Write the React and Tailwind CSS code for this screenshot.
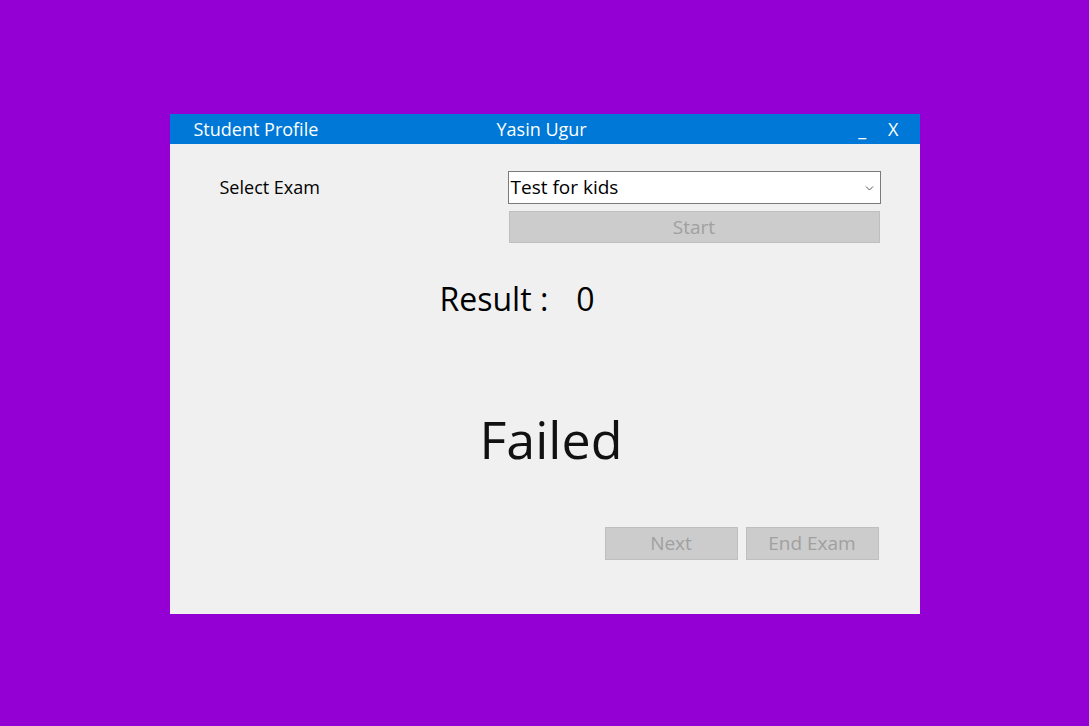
export default function App() {
  const font = { fontFamily: '"Open Sans", "Noto Sans", sans-serif' };
  return (
    <div className="flex h-[726px] w-[1089px] items-start justify-center bg-[#9400d3] pt-[114px]" style={font}>
      <div className="flex h-[500px] w-[750px] flex-col bg-[#f0f0f0]">
        {/* title bar */}
        <div className="flex h-[30px] items-center bg-[#0078d7] text-[18px] text-white">
          <div className="w-[327px] pl-[24px] leading-none">Student Profile</div>
          <div className="flex-1 leading-none">Yasin Ugur</div>
          <div className="pr-[21px] leading-none">
            <span className="mr-[22px]">_</span>
            <span>X</span>
          </div>
        </div>

        <div className="flex flex-col px-[39px]">
          <div className="mt-[27px] flex items-start">
            <div className="w-[299px] pl-[11px] pt-[3px] text-[18px] leading-[27px] text-black">Select Exam</div>
            <div className="flex w-[373px] flex-col">
              <div className="flex h-[33px] items-center justify-between border border-[#7a7a7a] bg-white pl-[2px] pr-[6px] text-[19px] text-black">
                <span>Test for kids</span>
                <svg width="9" height="6" viewBox="0 0 9 6" fill="none" stroke="#555" strokeWidth="1">
                  <path d="M1 1.5 L4.5 5 L8 1.5" />
                </svg>
              </div>
              <div className="mx-[1px] mt-[7px] flex h-[32px] items-center justify-center border border-[#bfbfbf] bg-[#cccccc] text-[19px] text-[#a0a0a0]">
                Start
              </div>
            </div>
          </div>

          <div className="mt-[36px] flex pl-[231px] text-[32px] leading-[40px] text-black">
            <span>Result :</span>
            <span className="ml-[28px]">0</span>
          </div>

          <div className="mt-[88px] flex h-[64px] items-center pl-[271px] text-[52px] leading-[64px] text-[#111]">Failed</div>

          <div className="mt-[56px] flex justify-end gap-[8px] pr-[2px]">
            <div className="flex h-[33px] w-[133px] items-center justify-center border border-[#bfbfbf] bg-[#cccccc] text-[19px] text-[#a0a0a0]">
              Next
            </div>
            <div className="flex h-[33px] w-[133px] items-center justify-center border border-[#bfbfbf] bg-[#cccccc] text-[19px] text-[#a0a0a0]">
              End Exam
            </div>
          </div>
        </div>
      </div>
    </div>
  );
}
